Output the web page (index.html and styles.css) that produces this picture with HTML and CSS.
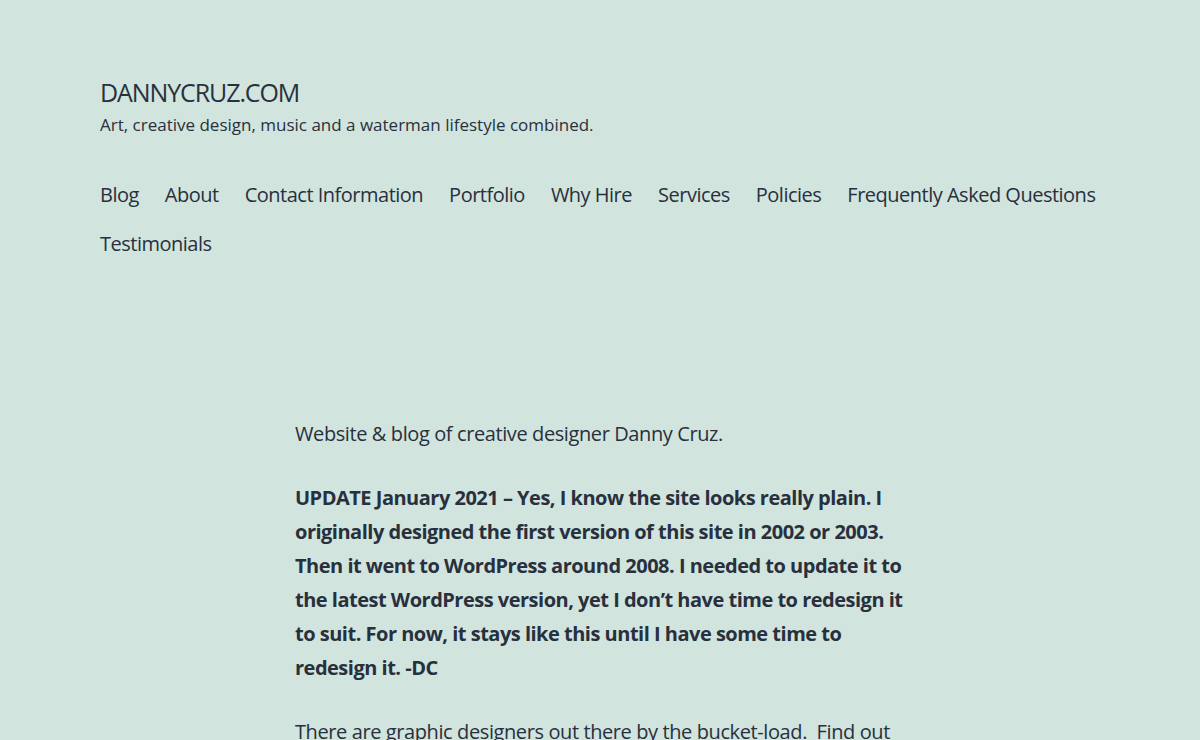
FILE: index.html
```html
<!DOCTYPE html>
<html lang="en">
<head>
<meta charset="utf-8">
<title>DANNYCRUZ.COM</title>
<link rel="stylesheet" href="styles.css">
</head>
<body>
<header class="site-header">
  <div class="branding">
    <p class="site-title"><a href="#">DANNYCRUZ.COM</a></p>
    <p class="site-description">Art, creative design, music and a waterman lifestyle combined.</p>
  </div>
  <nav class="primary-nav">
    <ul class="menu">
      <li><a href="#">Blog</a></li>
      <li><a href="#">About</a></li>
      <li><a href="#">Contact Information</a></li>
      <li><a href="#">Portfolio</a></li>
      <li><a href="#">Why Hire</a></li>
      <li><a href="#">Services</a></li>
      <li><a href="#">Policies</a></li>
      <li><a href="#">Frequently Asked Questions</a></li>
      <li><a href="#">Testimonials</a></li>
    </ul>
  </nav>
</header>
<main class="site-main">
  <div class="entry-content">
    <p>Website &amp; blog of creative designer Danny Cruz.</p>
    <p><strong>UPDATE January 2021 – Yes, I know the site looks really plain. I originally designed the first version of this site in 2002 or 2003. Then it went to WordPress around 2008. I needed to update it to the latest WordPress version, yet I don’t have time to redesign it to suit. For now, it stays like this until I have some time to redesign it. -DC</strong></p>
    <p>There are graphic designers out there by the bucket-load.&nbsp; Find out what makes Danny Cruz different and why you should hire him for your next project.</p>
  </div>
</main>
</body>
</html>
```
FILE: styles.css
```css
html, body {
  margin: 0;
  padding: 0;
}
body {
  background: #d1e4dd;
  color: #28303d;
  font-family: "Open Sans", "Noto Sans", sans-serif;
  font-size: 20px;
  line-height: 1.7;
  letter-spacing: -0.4px;
}
a {
  color: #28303d;
  text-decoration: none;
}
.site-header {
  padding: 76px 100px 0;
}
.branding .site-title {
  margin: 0;
  font-size: 25px;
  line-height: 1.3;
  text-transform: uppercase;
  letter-spacing: -1.1px;
}
.branding .site-description {
  margin: 4px 0 0;
  font-size: 17px;
  line-height: 1.4;
  letter-spacing: 0;
}
.primary-nav {
  margin-top: 34px;
}
.menu {
  list-style: none;
  margin: 0;
  padding: 0;
  display: flex;
  flex-wrap: wrap;
  column-gap: 26px;
}
.menu li {
  line-height: 49px;
  font-size: 20px;
  letter-spacing: -0.5px;
}
.site-main {
  padding-top: 149px;
}
.entry-content {
  max-width: 610px;
  margin: 0 auto;
}
.entry-content p {
  margin: 0 0 30px;
}
.entry-content strong {
  letter-spacing: -0.5px;
}
```
